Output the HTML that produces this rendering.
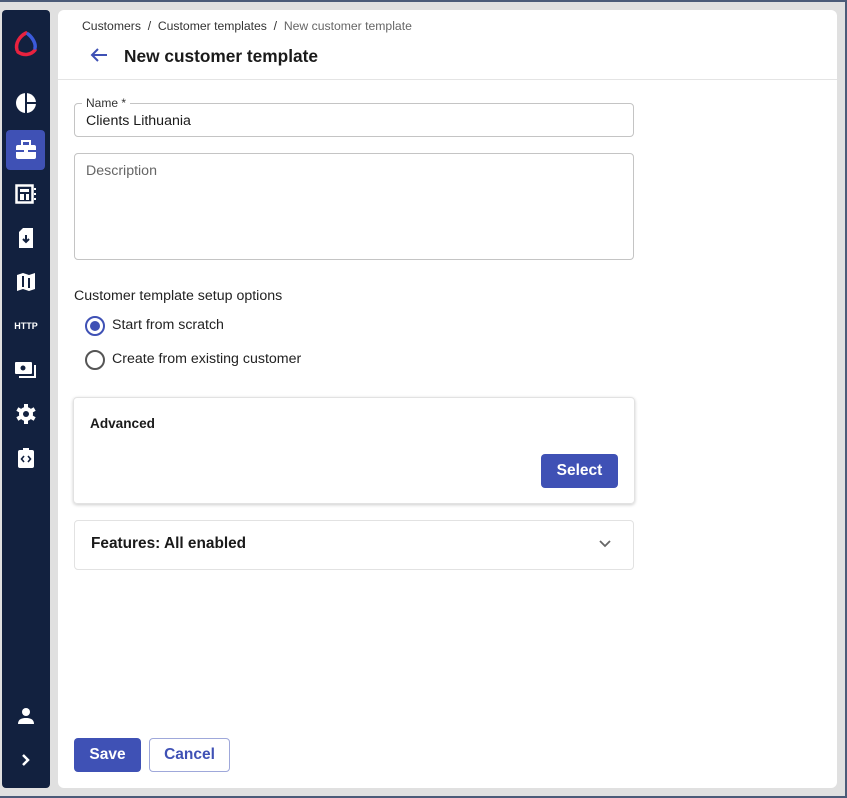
<!DOCTYPE html>
<html><head><style>
*{box-sizing:border-box;margin:0;padding:0}
body{width:847px;height:798px;overflow:hidden;font-family:"Liberation Sans",Roboto,sans-serif;background:#4b5b78;}
.frame{position:absolute;left:0;top:2px;width:845px;height:794px;background:#e0e0e0;}
.side{position:absolute;left:2px;top:8px;width:48px;height:778px;background:#12213f;border-radius:4px;}
.main{position:absolute;left:58px;top:8px;width:779px;height:778px;background:#fff;border-radius:6px;}
.ic{position:absolute;left:0;width:48px;display:flex;justify-content:center;align-items:center;height:40px;}
.abs{position:absolute}
.btn{position:absolute;background:#3f51b5;color:#fff;font-weight:bold;font-size:15.5px;border-radius:4px;display:flex;align-items:center;justify-content:center}
</style></head><body>
<div class="frame">
<div class="side">
 <div class="ic" style="top:14px"><svg width="28" height="28" viewBox="0 0 28 28"><path d="M14 3 C8 6 3 13 5 20" stroke="#e8223f" stroke-width="3.5" fill="none" stroke-linecap="round"/><path d="M6 22 C12 26 19 25 23 20" stroke="#e8223f" stroke-width="3.5" fill="none" stroke-linecap="round"/><path d="M16 4 C21 8 24 14 23 18" stroke="#3b5bdb" stroke-width="3.5" fill="none" stroke-linecap="round"/></svg></div>
 <div class="ic" style="top:73px"><svg width="22" height="22" viewBox="0 0 22 22"><circle cx="11" cy="11" r="10" fill="#fff"/><path d="M11 1V21M11 11H21" stroke="#12213f" stroke-width="2"/></svg></div>
 <div class="abs" style="left:4px;top:120px;width:39px;height:40px;background:#3f51b5;border-radius:4px"></div>
 <div class="ic" style="top:120px"><svg width="22" height="20" viewBox="0 0 22 20"><rect x="7" y="1" width="8" height="5" fill="none" stroke="#fff" stroke-width="2"/><rect x="1" y="5" width="20" height="14" rx="2" fill="#fff"/><rect x="1" y="10" width="20" height="2" fill="#3f51b5"/><rect x="9" y="9" width="4" height="4" fill="#fff"/></svg></div>
 <div class="ic" style="top:164px"><svg width="22" height="20" viewBox="0 0 22 20"><rect x="1.5" y="1.5" width="16" height="17" fill="none" stroke="#fff" stroke-width="2.5"/><rect x="5" y="5" width="9" height="3" fill="#fff"/><rect x="5" y="10" width="4" height="6" fill="#fff"/><rect x="11" y="10" width="3" height="6" fill="#fff"/><path d="M19 5h2M19 10h2M19 15h2" stroke="#fff" stroke-width="2"/></svg></div>
 <div class="ic" style="top:208px"><svg width="18" height="22" viewBox="0 0 18 22"><path d="M6 1H16V21H2V5Z" fill="#fff"/><path d="M9 8V15M6 12L9 15L12 12" stroke="#12213f" stroke-width="2" fill="none"/></svg></div>
 <div class="ic" style="top:252px"><svg width="20" height="20" viewBox="0 0 20 20"><path d="M1 3L7 1L13 3L19 1V17L13 19L7 17L1 19Z" fill="#fff"/><path d="M7 4V15M13 6V16" stroke="#12213f" stroke-width="2"/></svg></div>
 <div class="ic" style="top:296px;color:#fff;font-size:9px;font-weight:bold">HTTP</div>
 <div class="ic" style="top:340px"><svg width="24" height="20" viewBox="0 0 24 20"><rect x="1" y="2" width="17" height="12" rx="1" fill="#fff"/><circle cx="9" cy="8" r="2.5" fill="#12213f"/><path d="M21 5V17H5" stroke="#fff" stroke-width="2" fill="none"/></svg></div>
 <div class="ic" style="top:384px"><svg width="22" height="22" viewBox="0 0 22 22"><g fill="#fff"><circle cx="11" cy="11" r="7"/><rect x="9" y="1" width="4" height="20"/><rect x="9" y="1" width="4" height="20" transform="rotate(60 11 11)"/><rect x="9" y="1" width="4" height="20" transform="rotate(120 11 11)"/></g><circle cx="11" cy="11" r="3" fill="#12213f"/></svg></div>
 <div class="ic" style="top:428px"><svg width="18" height="22" viewBox="0 0 18 22"><rect x="1" y="3" width="16" height="18" rx="2" fill="#fff"/><rect x="6" y="1" width="6" height="4" fill="#fff"/><path d="M7 9L4.5 12L7 15M11 9L13.5 12L11 15" stroke="#12213f" stroke-width="1.6" fill="none"/></svg></div>
 <div class="ic" style="top:686px"><svg width="18" height="18" viewBox="0 0 18 18"><circle cx="9" cy="5" r="4" fill="#fff"/><path d="M1 17C1 12 5 11 9 11S17 12 17 17Z" fill="#fff"/></svg></div>
 <div class="ic" style="top:730px"><svg width="12" height="14" viewBox="0 0 12 14"><path d="M3 2L8 7L3 12" stroke="#fff" stroke-width="2.5" fill="none"/></svg></div>
</div>
<div class="main">
 <div class="abs" style="left:24px;top:9px;font-size:12.2px;color:#333">Customers &nbsp;/&nbsp; Customer templates &nbsp;/&nbsp; <span style="color:#666">New customer template</span></div>
 <svg class="abs" style="left:32px;top:37px" width="18" height="16" viewBox="0 0 18 16"><path d="M17 8H2M8 2L2 8L8 14" stroke="#3f51b5" stroke-width="2" fill="none"/></svg>
 <div class="abs" style="left:66px;top:36px;font-size:17.3px;font-weight:bold;color:#1a1a1a">New customer template</div>
 <div class="abs" style="left:0;top:69px;width:779px;height:1px;background:#e4e4e4"></div>
 <div class="abs" style="left:16px;top:93px;width:560px;height:34px;border:1px solid #c4c4c4;border-radius:4px"></div>
 <div class="abs" style="left:24px;top:86px;background:#fff;padding:0 4px;font-size:12px;color:#333">Name *</div>
 <div class="abs" style="left:28px;top:103px;font-size:14.2px;color:#1a1a1a">Clients Lithuania</div>
 <div class="abs" style="left:16px;top:143px;width:560px;height:107px;border:1px solid #c4c4c4;border-radius:4px"></div>
 <div class="abs" style="left:28px;top:153px;font-size:14.2px;color:#666">Description</div>
 <div class="abs" style="left:16px;top:278px;font-size:14.2px;color:#222">Customer template setup options</div>
 <div class="abs" style="left:27px;top:306px;width:20px;height:20px;border:2px solid #3f51b5;border-radius:50%"><div style="margin:3px;width:10px;height:10px;background:#3f51b5;border-radius:50%"></div></div>
 <div class="abs" style="left:54px;top:307px;font-size:14.2px;color:#222">Start from scratch</div>
 <div class="abs" style="left:27px;top:340px;width:20px;height:20px;border:2px solid #555;border-radius:50%"></div>
 <div class="abs" style="left:54px;top:341px;font-size:14.2px;color:#222">Create from existing customer</div>
 <div class="abs" style="left:15px;top:387px;width:562px;height:107px;border:1px solid #e2e2e2;border-radius:4px;box-shadow:0 1px 3px rgba(0,0,0,.2)"></div>
 <div class="abs" style="left:32px;top:406px;font-size:13.6px;font-weight:bold;color:#1a1a1a">Advanced</div>
 <div class="btn" style="left:483px;top:444px;width:77px;height:34px">Select</div>
 <div class="abs" style="left:16px;top:510px;width:560px;height:50px;border:1px solid #e2e2e2;border-radius:4px"></div>
 <div class="abs" style="left:33px;top:525px;font-size:15.4px;font-weight:bold;color:#1a1a1a">Features: All enabled</div>
 <svg class="abs" style="left:540px;top:529px" width="14" height="10" viewBox="0 0 14 10"><path d="M2 2L7 7L12 2" stroke="#666" stroke-width="1.8" fill="none"/></svg>
 <div class="btn" style="left:16px;top:728px;width:67px;height:34px">Save</div>
 <div class="abs" style="left:91px;top:728px;width:81px;height:34px;border:1px solid #9fa8da;border-radius:4px;color:#3f51b5;font-weight:bold;font-size:15.5px;display:flex;align-items:center;justify-content:center">Cancel</div>
</div>
</div>
</body></html>
